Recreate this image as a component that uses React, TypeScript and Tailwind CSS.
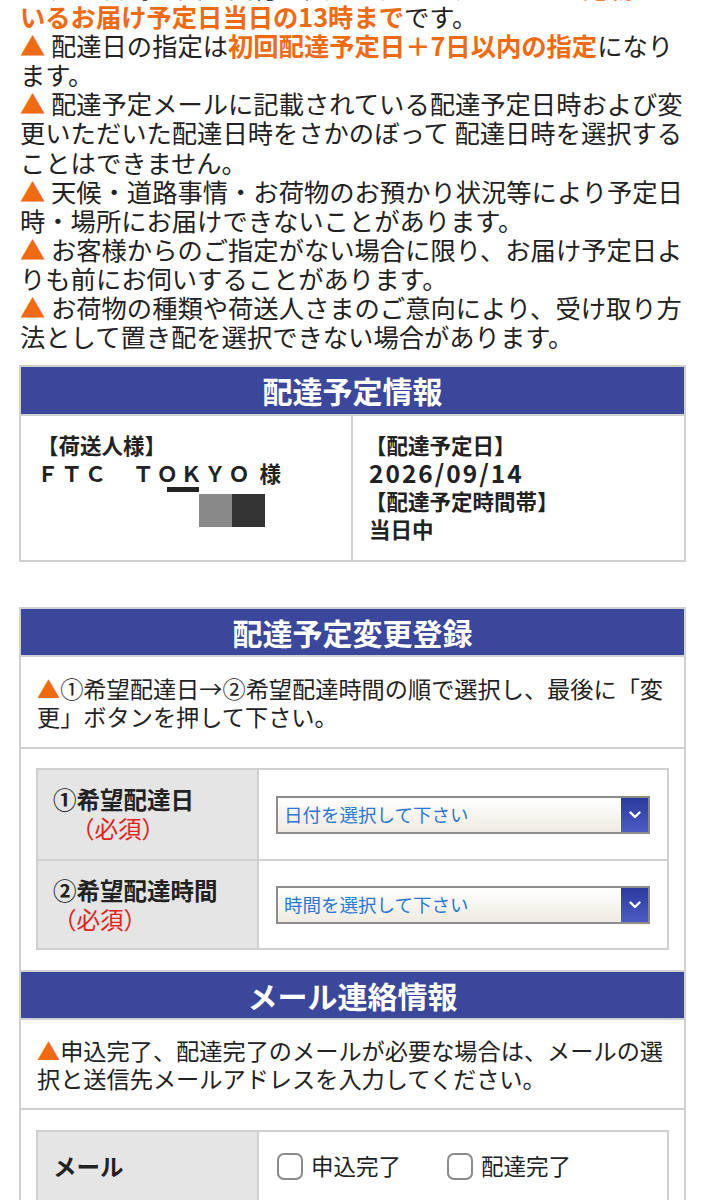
import React from 'react'

const jp = { fontFamily: '"Noto Sans CJK JP", "Noto Sans", sans-serif' }

function Tri() {
  return <span className="text-[#f06a12]">▲</span>
}

function SelectBox({ label }: { label: string }) {
  return (
    <div className="flex h-[38px] w-full border-2 border-[#8c8c8c] bg-gradient-to-b from-white to-[#efebe2]">
      <div className="flex flex-1 items-center pl-[6px] text-[18.5px] text-[#2a78d6]">{label}</div>
      <div className="flex w-[27px] items-center justify-center bg-gradient-to-b from-[#2c3a9e] to-[#4b5cc4]">
        <svg width="12" height="8" viewBox="0 0 12 8">
          <path d="M1.5 1.5 L6 6 L10.5 1.5" fill="none" stroke="#fff" strokeWidth="2.4" strokeLinecap="round" strokeLinejoin="round" />
        </svg>
      </div>
    </div>
  )
}

function Checkbox({ label }: { label: string }) {
  return (
    <label className="flex items-center gap-[8px]">
      <span className="inline-block h-[27px] w-[26px] rounded-[7px] border-2 border-[#8a8a8a] bg-white" />
      <span className="text-[22.5px] text-[#222]">{label}</span>
    </label>
  )
}

export default function App() {
  return (
    <div className="min-h-screen overflow-hidden bg-white" style={jp}>
      {/* Notes */}
      <div className="-mt-[27px] px-[20px] text-[25.3px] leading-[29.1px] text-[#222] whitespace-nowrap">
        <p>
          <Tri /> 配達日時の変更受付期限は、配達予定メールに<span className="font-bold text-[#f06a12]">記載されて</span>
          <br />
          <span className="font-bold text-[#f06a12]">いるお届け予定日当日の13時まで</span>です。
        </p>
        <p>
          <Tri /> 配達日の指定は<span className="font-bold text-[#f06a12]">初回配達予定日＋7日以内の指定</span>になり
          <br />
          ます。
        </p>
        <p>
          <Tri /> 配達予定メールに記載されている配達予定日時および変
          <br />
          更いただいた配達日時をさかのぼって 配達日時を選択する
          <br />
          ことはできません。
        </p>
        <p>
          <Tri /> 天候・道路事情・お荷物のお預かり状況等により予定日
          <br />
          時・場所にお届けできないことがあります。
        </p>
        <p>
          <Tri /> お客様からのご指定がない場合に限り、お届け予定日よ
          <br />
          りも前にお伺いすることがあります。
        </p>
        <p>
          <Tri /> お荷物の種類や荷送人さまのご意向により、受け取り方
          <br />
          法として置き配を選択できない場合があります。
        </p>
      </div>

      {/* 配達予定情報 */}
      <div className="mx-[19px] mt-[14px] border-2 border-[#d0d0d0]">
        <div className="flex h-[47px] items-center justify-center bg-[#3a479a] text-[30px] font-bold text-white">
          配達予定情報
        </div>
        <div className="flex h-[146px] border-t-2 border-[#d0d0d0] text-[21.5px] font-bold leading-[28px] text-[#222]">
          <div className="w-[332px] border-r-2 border-[#d0d0d0] pl-[16px] pt-[15px]">
            <div>【荷送人様】</div>
            <div className="tracking-[2.4px]">ＦＴＣ　ＴＯＫＹＯ 様</div>
            <div className="ml-[130px] flex items-start">
              <div className="h-[5px] w-[32px] bg-[#222]" />
              <div className="mt-[7px] h-[33px] w-[33px] bg-[#898989]" />
              <div className="mt-[7px] h-[33px] w-[33px] bg-[#333]" />
            </div>
          </div>
          <div className="flex-1 pl-[12px] pt-[15px]">
            <div>【配達予定日】</div>
            <div className="pl-[4px] text-[24.5px] tracking-[2px]">2026/09/14</div>
            <div>【配達予定時間帯】</div>
            <div className="pl-[4px]">当日中</div>
          </div>
        </div>
      </div>

      {/* 配達予定変更登録 / メール連絡情報 */}
      <div className="mx-[19px] mt-[45px] border-x-2 border-t-2 border-[#d0d0d0]">
        <div className="flex h-[46px] items-center justify-center bg-[#3a479a] text-[30px] font-bold text-white">
          配達予定変更登録
        </div>
        <div className="border-y-2 border-[#d0d0d0] px-[16px] pb-[17px] pt-[17px] text-[23.2px] leading-[28px] text-[#222] whitespace-nowrap">
          <Tri />①希望配達日→②希望配達時間の順で選択し、最後に「変
          <br />
          更」ボタンを押して下さい。
        </div>

        <div className="px-[15px] pb-[20px] pt-[19px]">
          <div className="border-2 border-[#d0d0d0]">
            <div className="flex h-[89px]">
              <div className="w-[221px] border-r-2 border-[#d0d0d0] bg-[#e5e5e5] pl-[15px] pt-[15px] text-[23.5px] leading-[29px]">
                <div className="font-bold text-[#222]">①希望配達日</div>
                <div className="pl-[18px] text-[#e3221b]">（必須）</div>
              </div>
              <div className="flex flex-1 items-center px-[17px]">
                <SelectBox label="日付を選択して下さい" />
              </div>
            </div>
            <div className="flex h-[89px] border-t-2 border-[#d0d0d0]">
              <div className="w-[221px] border-r-2 border-[#d0d0d0] bg-[#e5e5e5] pl-[15px] pt-[15px] text-[23.5px] leading-[29px]">
                <div className="font-bold text-[#222]">②希望配達時間</div>
                <div className="text-[#e3221b]">（必須）</div>
              </div>
              <div className="flex flex-1 items-center px-[17px]">
                <SelectBox label="時間を選択して下さい" />
              </div>
            </div>
          </div>
        </div>

        <div className="flex h-[48px] items-center justify-center border-t-2 border-[#d0d0d0] bg-[#3a479a] text-[30px] font-bold text-white">
          メール連絡情報
        </div>
        <div className="border-y-2 border-[#d0d0d0] px-[16px] pb-[16px] pt-[16px] text-[23.2px] leading-[28px] text-[#222] whitespace-nowrap">
          <Tri />申込完了、配達完了のメールが必要な場合は、メールの選
          <br />
          択と送信先メールアドレスを入力してください。
        </div>

        <div className="px-[15px] pt-[20px]">
          <div className="border-2 border-[#d0d0d0]">
            <div className="flex h-[68px]">
              <div className="flex w-[221px] items-center border-r-2 border-[#d0d0d0] bg-[#e5e5e5] pl-[15px] text-[23.5px] font-bold text-[#222]">
                メール
              </div>
              <div className="flex flex-1 items-center gap-[46px] px-[18px]">
                <Checkbox label="申込完了" />
                <Checkbox label="配達完了" />
              </div>
            </div>
          </div>
        </div>
      </div>
    </div>
  )
}
